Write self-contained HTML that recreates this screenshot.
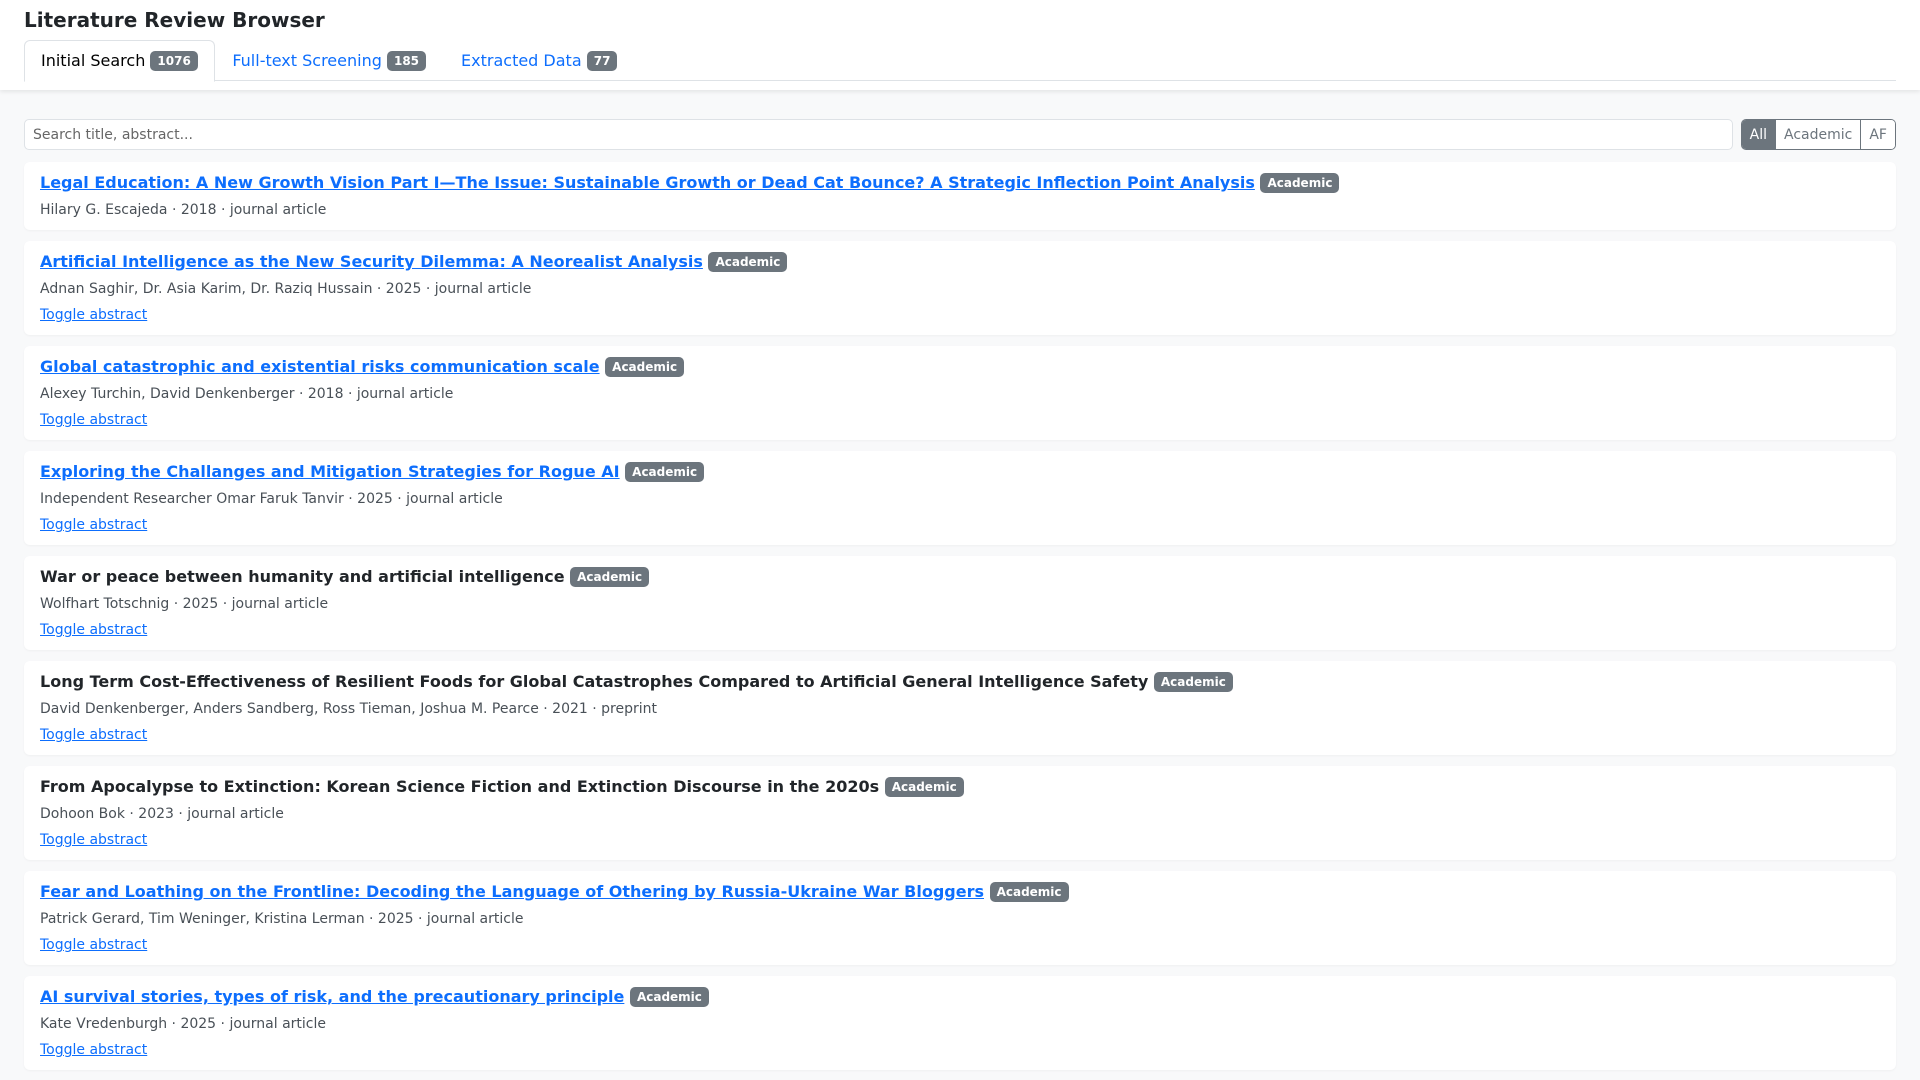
<!DOCTYPE html>
<html><head><meta charset="utf-8"><style>
*{box-sizing:border-box}
body{margin:0;background:#f8f9fa;font-family:"DejaVu Sans","Liberation Sans",sans-serif;color:#212529;width:1920px;height:1080px;overflow:hidden}
.hdr{background:#fff;box-shadow:0 2px 4px rgba(0,0,0,.08);padding:8px 24px 0;height:90px}
h1{font-size:20px;font-weight:bold;margin:0;line-height:24px}
.tabs{display:flex;margin-top:8px;border-bottom:1px solid #dee2e6;width:1872px;height:41px}
.tab{padding:0 16.5px;font-size:16px;line-height:40px;color:#0d6efd;border:1px solid transparent;border-radius:6px 6px 0 0}
.tab.act{color:#000;border-color:#dee2e6;border-bottom-color:#fff;background:#fff;height:42px;padding:0 16px}
.bd{display:inline-block;background:#6c757d;color:#fff;font-size:12px;font-weight:bold;padding:3px 7px;border-radius:5px;line-height:14px;vertical-align:1px}
.main{padding:29px 24px 0}
.srow{display:flex;gap:8px;height:31px;margin-bottom:12px}
.inp{flex:1;border:1px solid #dee2e6;border-radius:5px;background:#fff;font-size:14px;color:#666;padding:0 8px;line-height:30px}
.bg{display:flex;border:1px solid #6c757d;border-radius:5px;overflow:hidden;font-size:14px;color:#6c757d}
.bg span{padding:0 8px;line-height:30px;background:#fff}
.bg span+span{border-left:1px solid #6c757d}
.bg .on{background:#6c757d;color:#fff}
.card{background:#fff;border-radius:6px;padding:9px 16px 9px;margin-bottom:11px;box-shadow:0 1px 2px rgba(0,0,0,.04)}
.card:first-of-type{padding-bottom:12px}
.t{font-size:16px;font-weight:bold;line-height:24px;margin-bottom:5px;white-space:nowrap}
.t a{color:#0d6efd;text-decoration:underline}
.m{font-size:14px;line-height:21px;color:#495057}
.tg{font-size:14px;line-height:21px;margin-top:5px;color:#0d6efd;text-decoration:underline}
</style></head><body>
<div class="hdr"><h1>Literature Review Browser</h1>
<div class="tabs"><div class="tab act">Initial Search <span class="bd">1076</span></div><div class="tab">Full-text Screening <span class="bd">185</span></div><div class="tab">Extracted Data <span class="bd">77</span></div></div></div>
<div class="main">
<div class="srow"><div class="inp">Search title, abstract...</div><div class="bg"><span class="on">All</span><span>Academic</span><span>AF</span></div></div>
<div class="card"><div class="t"><a>Legal Education: A New Growth Vision Part I—The Issue: Sustainable Growth or Dead Cat Bounce? A Strategic Inflection Point Analysis</a> <span class="bd">Academic</span></div><div class="m">Hilary G. Escajeda · 2018 · journal article</div></div>
<div class="card"><div class="t"><a>Artificial Intelligence as the New Security Dilemma: A Neorealist Analysis</a> <span class="bd">Academic</span></div><div class="m">Adnan Saghir, Dr. Asia Karim, Dr. Raziq Hussain · 2025 · journal article</div><div class="tg">Toggle abstract</div></div>
<div class="card"><div class="t"><a>Global catastrophic and existential risks communication scale</a> <span class="bd">Academic</span></div><div class="m">Alexey Turchin, David Denkenberger · 2018 · journal article</div><div class="tg">Toggle abstract</div></div>
<div class="card"><div class="t"><a>Exploring the Challanges and Mitigation Strategies for Rogue AI</a> <span class="bd">Academic</span></div><div class="m">Independent Researcher Omar Faruk Tanvir · 2025 · journal article</div><div class="tg">Toggle abstract</div></div>
<div class="card"><div class="t">War or peace between humanity and artificial intelligence <span class="bd">Academic</span></div><div class="m">Wolfhart Totschnig · 2025 · journal article</div><div class="tg">Toggle abstract</div></div>
<div class="card"><div class="t">Long Term Cost-Effectiveness of Resilient Foods for Global Catastrophes Compared to Artificial General Intelligence Safety <span class="bd">Academic</span></div><div class="m">David Denkenberger, Anders Sandberg, Ross Tieman, Joshua M. Pearce · 2021 · preprint</div><div class="tg">Toggle abstract</div></div>
<div class="card"><div class="t">From Apocalypse to Extinction: Korean Science Fiction and Extinction Discourse in the 2020s <span class="bd">Academic</span></div><div class="m">Dohoon Bok · 2023 · journal article</div><div class="tg">Toggle abstract</div></div>
<div class="card"><div class="t"><a>Fear and Loathing on the Frontline: Decoding the Language of Othering by Russia-Ukraine War Bloggers</a> <span class="bd">Academic</span></div><div class="m">Patrick Gerard, Tim Weninger, Kristina Lerman · 2025 · journal article</div><div class="tg">Toggle abstract</div></div>
<div class="card"><div class="t"><a>AI survival stories, types of risk, and the precautionary principle</a> <span class="bd">Academic</span></div><div class="m">Kate Vredenburgh · 2025 · journal article</div><div class="tg">Toggle abstract</div></div>
</div></body></html>
